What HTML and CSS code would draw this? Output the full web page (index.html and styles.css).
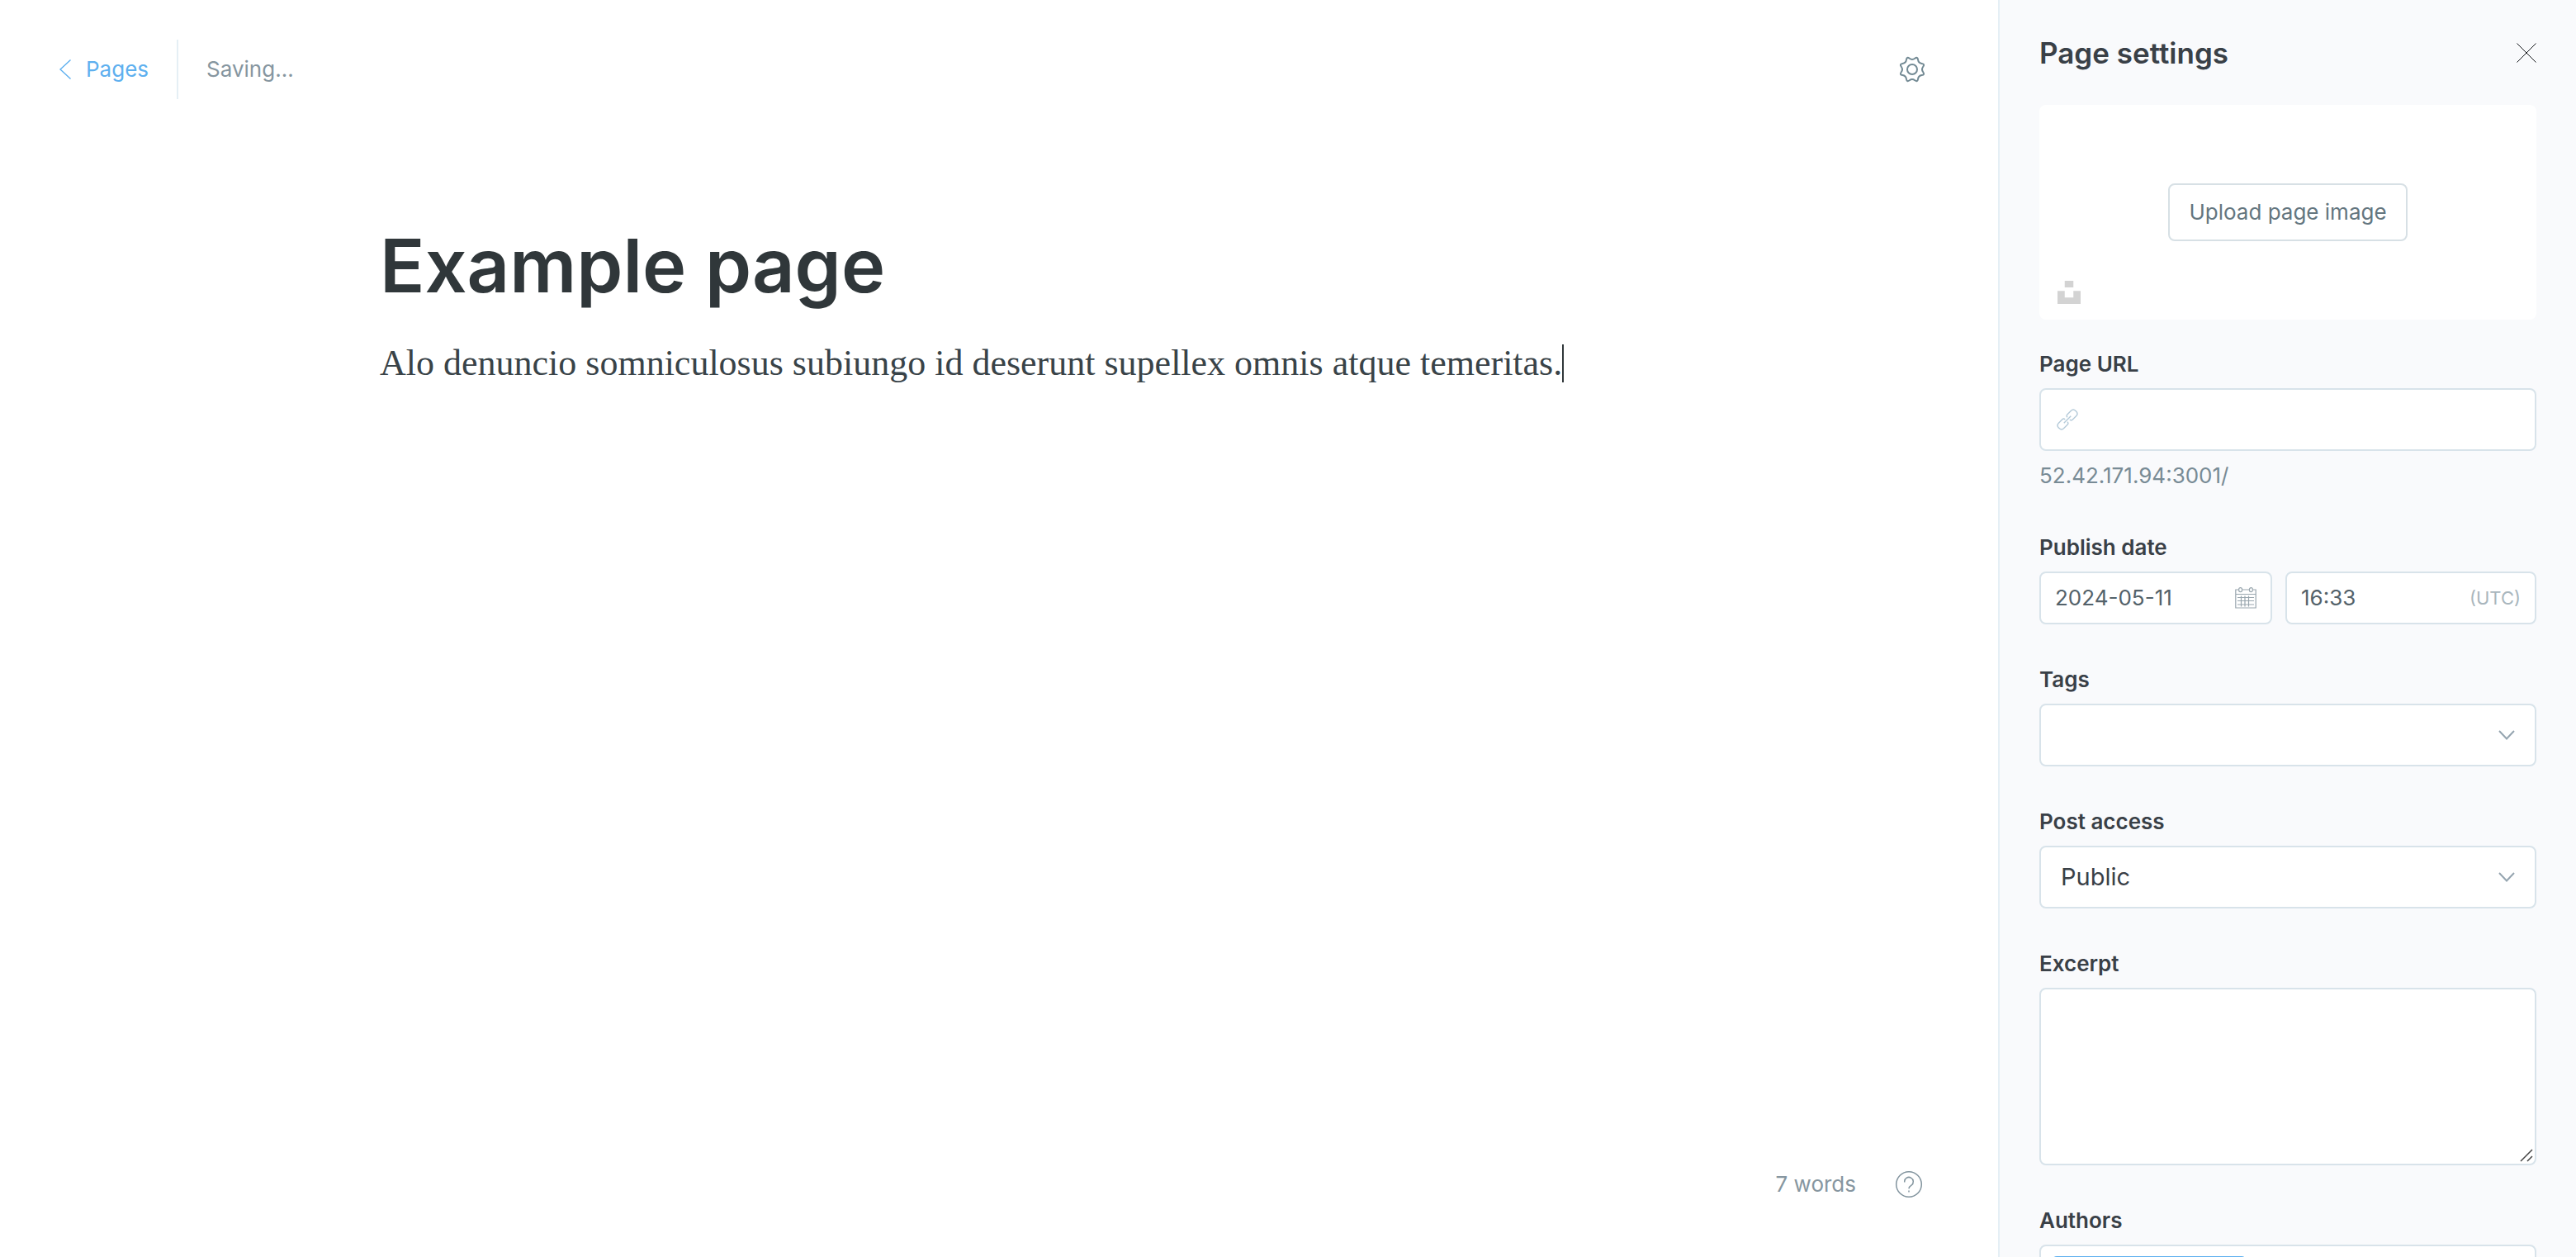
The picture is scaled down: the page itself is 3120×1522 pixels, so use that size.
FILE: index.html
```html
<!DOCTYPE html>
<html lang="en">
<head>
<meta charset="utf-8">
<title>Example page</title>
<link rel="stylesheet" href="styles.css">
</head>
<body>
<div class="app">
  <main class="editor">
    <header class="topbar">
      <a class="back" href="#pages">
        <svg class="back-icon" viewBox="0 0 14 24" aria-hidden="true"><path d="M13.500.5 1 12l12.500 11.500"/></svg>
        Pages
      </a>
      <span class="status">Saving...</span>
      <button class="icon-button gear" type="button" aria-label="Settings">
        <svg viewBox="0 0 32 32" aria-hidden="true"><circle cx="16" cy="16" r="6"/><path d="M19.250 2.780Q22.490.340 23.060 4.360Q23.620 8.380 27.640 8.950Q31.660 9.510 29.220 12.750Q26.780 16 29.220 19.250Q31.660 22.490 27.640 23.050Q23.620 23.620 23.060 27.640Q22.490 31.660 19.250 29.220Q16 26.780 12.750 29.220Q9.510 31.660 8.940 27.640Q8.380 23.620 4.360 23.050Q.340 22.490 2.780 19.250Q5.220 16 2.780 12.750Q.340 9.510 4.360 8.950Q8.380 8.380 8.940 4.360Q9.510.340 12.750 2.780Q16 5.220 19.250 2.780Z"/></svg>
      </button>
    </header>
    <section class="canvas">
      <input class="title" type="text" value="Example page" aria-label="Page title">
      <div class="body-text" contenteditable="true" role="textbox" aria-label="Page content"><p>Alo denuncio somniculosus subiungo id deserunt supellex omnis atque temeritas.<span class="caret"></span></p></div>
    </section>
    <footer class="statusbar">
      <span>7 words</span>
      <button class="icon-button help" type="button" aria-label="Help">
        <svg viewBox="0 0 32 32" aria-hidden="true"><circle cx="16" cy="16" r="15.300"/><path d="M10.700 13.500v-.8a5.300 5.300 0 1 1 8.300 4.400c-1.900 1.200-3 2-3 4.200M16 23.500v2"/></svg>
      </button>
    </footer>
  </main>

  <aside class="settings">
    <header class="settings-header">
      <h2>Page settings</h2>
      <button class="icon-button close" type="button" aria-label="Close">
        <svg viewBox="0 0 24 24" aria-hidden="true"><path d="M.5.500l23 23M23.500.5l-23 23"/></svg>
      </button>
    </header>
    <form class="settings-form">
      <div class="dropzone">
        <button class="upload" type="button">Upload page image</button>
        <svg class="unsplash" viewBox="0 0 32 32" aria-hidden="true"><path d="M10 9V0h12v9zm12 5h10v18H0V14h10v9h12z"/></svg>
      </div>

      <div class="field">
        <label for="url">Page URL</label>
        <div class="control">
          <svg class="link-icon" viewBox="-13 -13 26 26" aria-hidden="true"><g transform="rotate(-45)"><path d="M-6 0H6M2-2q0-2.500 2.500-2.500h6q4 0 4 4v1q0 4-4 4h-6Q2 4.500 2 2M-2-2q0-2.500-2.500-2.500h-6q-4 0-4 4v1q0 4 4 4h6Q-2 4.500-2 2"/></g></svg>
          <input id="url" type="text">
        </div>
        <p class="hint">52.42.171.94:3001/</p>
      </div>

      <div class="field">
        <label for="date">Publish date</label>
        <div class="date-row">
          <div class="control compact">
            <input id="date" type="text" value="2024-05-11">
            <svg class="calendar-icon" viewBox="0 0 26 26" aria-hidden="true"><path d="M4.500 3H.8v22h24.400V3h-3.700M8.500 3h9M.8 8.500h24.400M3 12.500h20M3 16.500h20M3 21h20M7.500 10.500v13M12 10.500v13M16.500 10.500v13"/><rect x="4.700" y=".7" width="3.800" height="5" rx="1.900"/><rect x="17.500" y=".7" width="3.800" height="5" rx="1.900"/></svg>
          </div>
          <div class="control compact">
            <input id="time" type="text" value="16:33" aria-label="Publish time">
            <span class="zone">(UTC)</span>
          </div>
        </div>
      </div>

      <div class="field">
        <label for="tags">Tags</label>
        <div class="control">
          <input id="tags" type="text">
          <svg class="chevron" viewBox="0 0 20 12" aria-hidden="true"><path d="m1 1 9 9.500L19 1"/></svg>
        </div>
      </div>

      <div class="field">
        <label for="access">Post access</label>
        <div class="control">
          <select id="access"><option>Public</option></select>
          <svg class="chevron" viewBox="0 0 20 12" aria-hidden="true"><path d="m1 1 9 9.500L19 1"/></svg>
        </div>
      </div>

      <div class="field">
        <label for="excerpt">Excerpt</label>
        <div class="textarea-wrap">
          <textarea id="excerpt"></textarea>
          <svg class="grip" viewBox="0 0 16 16" aria-hidden="true"><path d="M1 15 15 1M9 15l6-6"/></svg>
        </div>
      </div>

      <div class="field">
        <label for="authors">Authors</label>
        <div class="control authors">
          <span class="token"></span>
          <input id="authors" type="text">
        </div>
      </div>
    </form>
  </aside>
</div>
</body>
</html>
```
FILE: styles.css
```css
* { box-sizing: border-box; }

body {
  margin: 0;
  background: #fff;
  color: #394047;
  font: 26px/30px Inter, "Liberation Sans", sans-serif;
}

h2, p { margin: 0; }

input, select, textarea, button { font: inherit; color: inherit; }

svg { display: block; fill: none; stroke: currentColor; }

.app { display: flex; height: 100vh; overflow: hidden; }

/* Editor */
.editor { flex: 1; min-width: 0; display: flex; flex-direction: column; }

.topbar {
  display: flex;
  align-items: center;
  padding: 48px 88px 48px 72px;
}

.back {
  display: flex;
  align-items: center;
  gap: 18px;
  height: 72px;
  padding-right: 34px;
  border-right: 2px solid #e5eff5;
  color: #5eb0ef;
  text-decoration: none;
}

.back-icon { width: 14px; height: 24px; stroke-width: 1.4; }

.status { margin-left: 34px; color: #8696a0; }

.icon-button {
  width: 32px;
  height: 32px;
  padding: 0;
  border: 0;
  background: none;
}

.icon-button svg { width: 100%; height: 100%; overflow: visible; }

.gear { margin-left: auto; color: #738a94; stroke-width: 2; }
.help { color: #82949e; stroke-width: 1.5; }

.canvas { flex: 1; width: 100%; max-width: 1500px; margin: 0 auto; }

.title {
  display: block;
  width: 100%;
  height: 114px;
  margin-top: 96px;
  padding: 0;
  border: 0;
  outline: 0;
  background: none;
  color: #30373a;
  font-size: 90px;
  font-weight: 600;
}

.body-text {
  margin-top: 32px;
  outline: 0;
  color: #394348;
  font: 44px/60px "Liberation Serif", serif;
}

.caret {
  display: inline-block;
  width: 2px;
  height: 46px;
  background: #30373a;
  vertical-align: -9px;
}

.statusbar {
  display: flex;
  justify-content: flex-end;
  align-items: center;
  gap: 48px;
  padding: 0 92px 72px;
  color: #8696a0;
}

/* Settings panel */
.settings {
  width: 700px;
  padding: 0 48px;
  border-left: 2px solid #e5eff5;
  background: #f9fafc;
}

.settings-header {
  display: flex;
  align-items: center;
  justify-content: space-between;
  height: 127px;
}

.settings-header h2 { font-size: 35px; font-weight: 600; }

.close { width: 24px; height: 24px; color: #15171a; stroke-width: 1; }

.dropzone {
  position: relative;
  display: flex;
  align-items: center;
  justify-content: center;
  height: 260px;
  margin-bottom: 39px;
  border-radius: 8px;
  background: #fff;
}

.upload {
  height: 70px;
  padding: 0 23px;
  border: 2px solid #d7e0e5;
  border-radius: 8px;
  background: #fff;
  color: #64767f;
}

.unsplash {
  position: absolute;
  left: 22px;
  bottom: 19px;
  width: 28px;
  height: 28px;
  fill: #d3d3d3;
  stroke: none;
}

.field { margin-bottom: 52px; }

.field label {
  display: block;
  margin-bottom: 14px;
  font-weight: 600;
}

.control {
  display: flex;
  align-items: center;
  min-width: 0;
  height: 76px;
  padding: 0 24px;
  border: 2px solid #d8e3ea;
  border-radius: 8px;
  background: #fff;
}

.control input, .control select {
  flex: 1;
  width: 100%;
  min-width: 0;
  padding: 0;
  border: 0;
  outline: 0;
  background: none;
  appearance: none;
}

.control select { font-size: 29px; line-height: 40px; }

.compact { height: 64px; padding: 0 17px; color: #54626a; }

.date-row {
  display: grid;
  grid-template-columns: minmax(0, 282fr) minmax(0, 304fr);
  gap: 16px;
}

.link-icon {
  flex: none;
  width: 26px;
  height: 26px;
  margin-left: -5px;
  overflow: visible;
  color: #b4cad9;
  stroke-width: 1.4;
}

.calendar-icon { flex: none; width: 26px; height: 26px; color: #99a6ae; stroke-width: 1.2; }
.chevron { flex: none; width: 20px; height: 12px; color: #95a5b0; stroke-width: 2; }
.zone { color: #a9b6bd; font-size: 22px; }

.hint { margin-top: 10px; color: #788b95; line-height: 40px; }

.textarea-wrap { position: relative; height: 215px; }

.textarea-wrap textarea {
  display: block;
  width: 100%;
  height: 100%;
  padding: 16px 24px;
  border: 2px solid #d8e3ea;
  border-radius: 8px;
  outline: 0;
  background: #fff;
  resize: none;
}

.grip {
  position: absolute;
  right: 4px;
  bottom: 4px;
  width: 16px;
  height: 16px;
  color: #444;
  stroke-width: 1.5;
}

.authors { align-items: flex-start; padding: 12px 13px; }
.token { flex: none; width: 236px; height: 48px; border-radius: 6px; background: #5eb0ef; }
```
